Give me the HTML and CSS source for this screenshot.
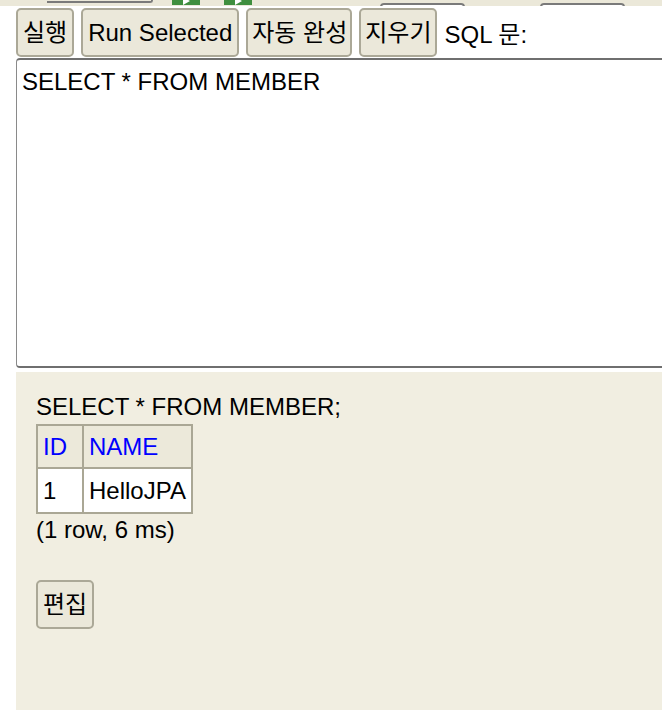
FILE: index.html
```html
<!DOCTYPE html>
<html>
<head>
<meta charset="utf-8">
<link rel="stylesheet" href="styles.css">
</head>
<body>
<div class="topstrip">
  <span class="sel"></span>
  <span class="ico ico1"><span class="arr"></span></span>
  <span class="ico ico2"><span class="arr"></span></span>
  <span class="tab tab1"></span>
  <span class="tab tab2"></span>
</div>
<div class="toolbar">
  <button class="btn">실행</button>
  <button class="btn">Run Selected</button>
  <button class="btn ko">자동 완성</button>
  <button class="btn ko">지우기</button>
  <span class="label">SQL 문:</span>
</div>
<div class="editor">SELECT * FROM MEMBER</div>
<div class="result">
  <div class="stmt">SELECT * FROM MEMBER;</div>
  <table class="grid">
    <tr><th class="c1">ID</th><th class="c2">NAME</th></tr>
    <tr><td class="c1">1</td><td class="c2">HelloJPA</td></tr>
  </table>
  <div class="info">(1 row, 6 ms)</div>
  <button class="btn edit">편집</button>
</div>
</body>
</html>
```
FILE: styles.css
```css
html, body {
  margin: 0;
  padding: 0;
  background: #ffffff;
  overflow: hidden;
  width: 662px;
  height: 710px;
}
body {
  font-family: "Liberation Sans", "Noto Sans CJK KR", sans-serif;
  font-size: 24px;
  color: #000;
}
.topstrip {
  height: 6px;
  background: #ebe8d9;
  display: flex;
  align-items: flex-start;
  overflow: hidden;
}
.sel {
  margin-left: 47px;
  width: 104px;
  height: 1px;
  border-bottom: 2px solid #7a7a7a;
  border-right: 2px solid #7a7a7a;
  border-bottom-right-radius: 3px;
  background: #ebe8d9;
}
.ico {
  width: 28px;
  height: 5px;
  background: #3f8f3f;
  display: flex;
  justify-content: center;
  align-items: flex-start;
}
.ico1 { margin-left: 19px; }
.ico2 { margin-left: 24px; }
.arr {
  width: 0;
  height: 0;
  border-left: 7px solid #ffffff;
  border-top: 4px solid transparent;
  border-bottom: 4px solid transparent;
  margin-top: -3px;
}
.tab {
  margin-top: 3px;
  width: 81px;
  height: 10px;
  background: #ffffff;
  border: 2px solid #7a7a7a;
  border-radius: 4px 4px 0 0;
}
.tab1 { margin-left: 128px; }
.tab2 { margin-left: 75px; }

.toolbar {
  display: flex;
  align-items: center;
  gap: 7px;
  padding: 2px 0 0 16px;
  height: 51px;
  box-sizing: border-box;
}
.btn {
  font-family: "Liberation Sans", "Noto Sans CJK KR", sans-serif;
  font-size: 24px;
  line-height: 28px;
  color: #000;
  background: #ebe8da;
  border: 2px solid #aba897;
  border-radius: 5px;
  padding: 9px 5px;
  height: 49px;
  margin: 0;
}
.btn.ko {
  padding-left: 4px;
  padding-right: 3px;
}
.label {
  margin-left: 1px;
}
.editor {
  margin: 1px -20px 0 16px;
  border-top: 2px solid #6f6f6f;
  border-bottom: 2px solid #6f6f6f;
  border-left: 1px solid #8a8a8a;
  border-radius: 4px 0 0 4px;
  padding: 8px 5px;
  line-height: 28px;
  box-sizing: content-box;
  height: 290px;
}
.result {
  margin: 4px 0 0 16px;
  background: #f1eee1;
  height: 339px;
  padding: 21px 20px 0 20px;
  box-sizing: border-box;
}
.stmt {
  line-height: 28px;
}
.grid {
  border-collapse: separate;
  border-spacing: 0;
  border: 1px solid #aaa795;
  margin-top: 3px;
}
.grid th, .grid td {
  border: 1px solid #aaa795;
  padding: 7px 5px 6px 5px;
  line-height: 28px;
  text-align: left;
  font-weight: normal;
}
.grid th {
  color: #0000ff;
  background: #ece9da;
}
.grid td {
  background: #ffffff;
  padding-top: 8px;
  padding-bottom: 7px;
}
.grid .c1 { width: 34px; }
.info {
  line-height: 28px;
  margin-top: 2px;
}
.edit {
  margin-top: 36px;
  padding: 9px 5px;
}
```
